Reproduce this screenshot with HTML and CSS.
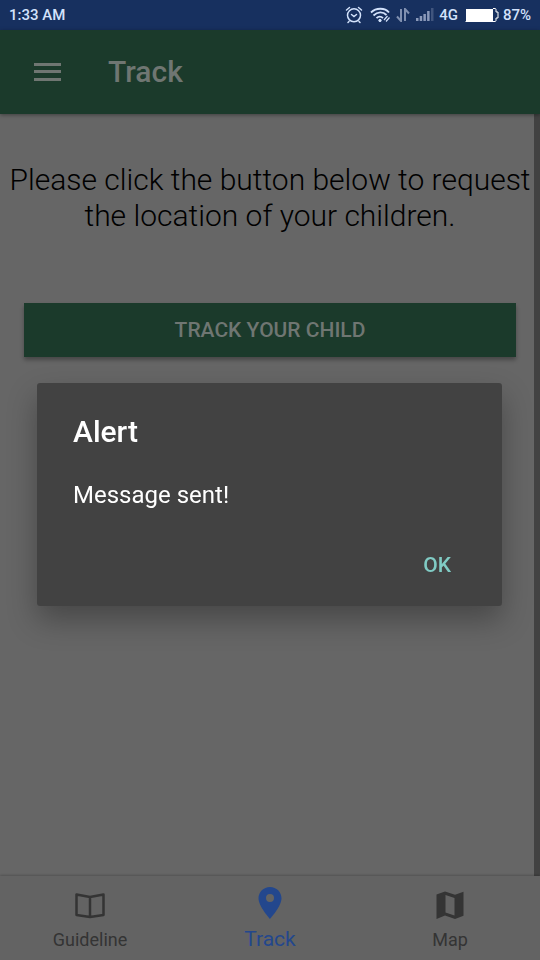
FILE: index.html
```html
<!DOCTYPE html>
<html lang="en">
<head>
<meta charset="utf-8">
<meta name="viewport" content="width=device-width, initial-scale=1">
<title>Track</title>
<link rel="stylesheet" href="styles.css">
</head>
<body>
<div class="status">
  <span class="clock">1:33 AM</span>
  <svg class="alarm" width="18" height="18" viewBox="0 0 18 18" fill="none" stroke="currentColor" stroke-width="1.500" stroke-linecap="round"><circle cx="9" cy="9.300" r="6.500"/><path d="M6.500 8.500l2.500 2 2.500-2M1.500 4l3-2.500M16.500 4l-3-2.500M4 15.500l-1 1M14 15.500l1 1"/></svg>
  <svg class="wifi" width="21" height="16" viewBox="0 0 21 16" fill="none" stroke="currentColor" stroke-width="1.800"><path d="M1 5.500c5-5 14-5 18 0M3.500 8.500c4-4 9.500-4 13-.5M6.500 11.200c2-2.200 4.500-2.200 6.500 0"/><circle cx="10" cy="13.500" r="1.200" fill="currentColor" stroke-width="1"/><path d="M14 13l3.500-4M16 14.500l3.500-4" stroke-width="1.200"/></svg>
  <svg class="data" width="14" height="14" viewBox="0 0 14 14" fill="none" stroke="currentColor" stroke-width="2"><path d="M5 1v12L1 8.500M9 13V1l4 4.500"/></svg>
  <svg class="signal" width="18" height="14" viewBox="0 0 18 14" fill="currentColor"><path d="M0 10h2.500v3H0zM3.700 8h2.500v5H3.700zM7.400 6h2.500v7H7.400zM11.100 3h2.500v10h-2.500z"/><path opacity=".35" d="M15 0h2.500v13H15z"/></svg>
  <span class="network">4G</span>
  <svg class="battery" width="34" height="14" viewBox="0 0 34 14"><path d="M1 1h27v12H1z" fill="#fff"/><path d="M.5 13.500h29.500c.6 0 1-.4 1-1v-2.500h2V4h-2V1.500c0-.6-.4-1-1-1H28" fill="none" stroke="#fff"/></svg>
  <span class="level">87%</span>
</div>
<div class="page">
  <header class="bar">
    <button class="menu" type="button" aria-label="Menu"><svg width="28" height="20" viewBox="0 0 28 20" fill="currentColor"><path d="M0 1h27v3H0zM0 8h27v3H0zM0 16h27v3H0z"/></svg></button>
    <h1 class="title">Track</h1>
  </header>
  <main class="content">
    <p class="intro">Please click the button below to request the location of your children.</p>
    <button class="track" type="button">TRACK YOUR CHILD</button>
  </main>
  <nav class="tabs">
    <a class="tab" href="#guideline">
      <svg width="32" height="32" viewBox="0 0 32 32" fill="none" stroke="currentColor" stroke-width="2.500" stroke-linejoin="round"><path d="M16 8L2.500 5.500v20.500l13.500 2 13.500-2V5.500zM16 8v20"/></svg>
      <span>Guideline</span>
    </a>
    <a class="tab active" href="#track" aria-current="page">
      <svg width="32" height="32" viewBox="0 0 32 32" fill="currentColor" fill-rule="evenodd"><path d="M16 0C9.500 0 4.500 5 4.500 11.300 4.500 19.500 16 32 16 32s11.500-12.500 11.500-20.700C27.500 5 22.500 0 16 0zm0 7a4 4 0 1 1 0 8 4 4 0 0 1 0-8z"/></svg>
      <span>Track</span>
    </a>
    <a class="tab" href="#map">
      <svg width="32" height="32" viewBox="0 0 32 32" fill="currentColor" fill-rule="evenodd"><path d="M2.500 5.500L11 2.500l10 3.300 8.500-3v24L21 30l-10-3.500L2.500 30zM11.500 6v17.500l9 3V9z"/></svg>
      <span>Map</span>
    </a>
  </nav>
</div>
<div class="overlay">
  <div class="alert" role="alertdialog" aria-labelledby="alert-title" aria-describedby="alert-text">
    <h2 class="alert-title" id="alert-title">Alert</h2>
    <p class="alert-text" id="alert-text">Message sent!</p>
    <button class="ok" type="button">OK</button>
  </div>
</div>
</body>
</html>
```
FILE: styles.css
```css
* {
  box-sizing: border-box;
}

body {
  margin: 0;
  min-height: 100vh;
  display: flex;
  flex-direction: column;
  background: #666;
  color: #000;
  font-family: Roboto, sans-serif;
}

button {
  border: 0;
  padding: 0;
  background: none;
  color: inherit;
  font: inherit;
}

svg {
  display: block;
}

h1,
h2,
p {
  margin: 0;
}

.status {
  display: flex;
  align-items: center;
  height: 30px;
  padding: 0 9px;
  background: #17305f;
  color: #d3e2fb;
  font-size: 15px;
  font-weight: 500;
}

.clock {
  margin-right: auto;
}

.wifi {
  margin-left: 7px;
}

.data {
  margin-left: 5px;
  color: #8090b0;
}

.signal {
  margin-left: 6px;
  color: #8b9aba;
}

.network {
  margin-left: 5px;
}

.battery {
  margin: 0 4px 0 7px;
}

.page {
  flex: 1;
  display: flex;
  flex-direction: column;
}

.bar {
  display: flex;
  align-items: center;
  gap: 46px;
  height: 84px;
  padding: 0 34px;
  background: #1b3a2b;
  color: #6f7672;
  box-shadow: 0 1px 4px rgba(0, 0, 0, 0.4);
  z-index: 1;
}

.title {
  font-size: 30px;
  font-weight: 500;
  line-height: 34px;
}

.content {
  flex: 1;
  padding: 48px 18px 0 24px;
  border-right: 6px solid #424242;
}

.intro {
  margin: 0 -16px;
  font-size: 30px;
  font-weight: 300;
  line-height: 36px;
  text-align: center;
}

.track {
  display: block;
  width: 100%;
  height: 54px;
  margin-top: 69px;
  background: #1b3a2b;
  color: #6f7672;
  font-size: 21px;
  font-weight: 500;
  box-shadow: 0 3px 4px rgba(0, 0, 0, 0.3);
}

.tabs {
  display: flex;
  height: 84px;
  background: #636363;
  box-shadow: 0 -1px 2px rgba(0, 0, 0, 0.2);
}

.tab {
  flex: 1;
  display: flex;
  flex-direction: column;
  align-items: center;
  gap: 8px;
  padding-top: 13px;
  color: #343434;
  font-size: 18px;
  line-height: 22px;
  text-decoration: none;
}

.tab.active {
  padding-top: 11px;
  color: #23478d;
  font-size: 21px;
  line-height: 24px;
}

.overlay {
  position: fixed;
  inset: 30px 0 0;
  z-index: 2;
  display: flex;
  align-items: center;
  padding: 0 38px 2px 37px;
}

.alert {
  flex: 1;
  display: flex;
  flex-direction: column;
  padding: 31px 36px 19px;
  border-radius: 3px;
  background: #424242;
  color: #fff;
  box-shadow: 0 14px 30px rgba(0, 0, 0, 0.3);
}

.alert-title {
  font-size: 30px;
  font-weight: 500;
  line-height: 36px;
}

.alert-text {
  margin-top: 30px;
  font-size: 24px;
  line-height: 30px;
}

.ok {
  align-self: flex-end;
  height: 44px;
  margin-top: 33px;
  padding: 0 15px;
  color: #80cbc4;
  font-size: 21px;
  font-weight: 500;
}
```
